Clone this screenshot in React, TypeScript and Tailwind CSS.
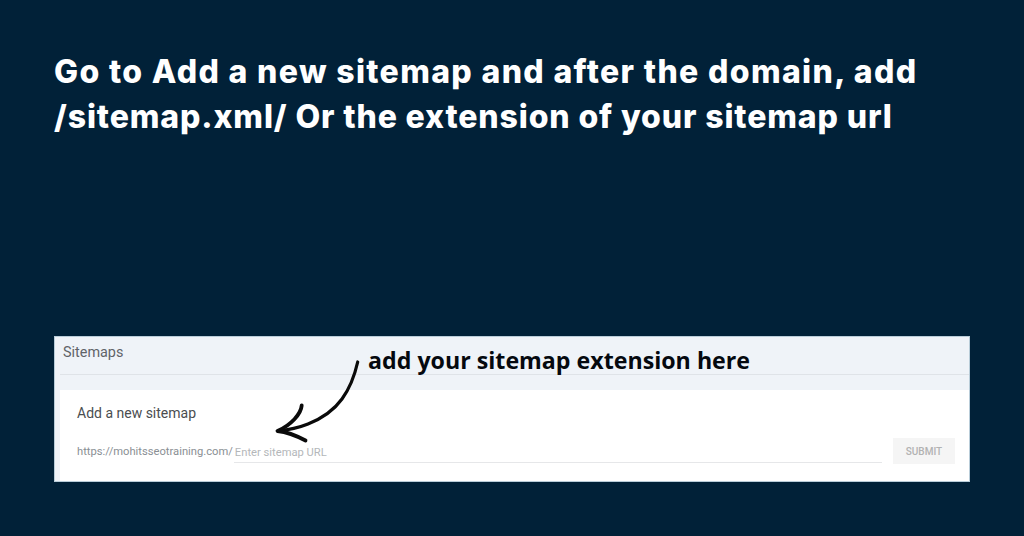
import React from 'react';

const App = () => {
  return (
    <div className="w-[1024px] h-[536px] overflow-hidden bg-[#012138] flex flex-col pl-[54px] pr-[54px] pt-[49px]">
      <h1 className="text-white font-extrabold text-[32px] leading-[45px] whitespace-nowrap font-['Inter',sans-serif]">
        <span className="block tracking-[1.35px]">Go to Add a new sitemap and after the domain, add</span>
        <span className="block tracking-[0.88px]">/sitemap.xml/ Or the extension of your sitemap url</span>
      </h1>

      <div className="relative mt-[197px] h-[146px] bg-[#eff3f8] flex flex-col font-['Roboto',sans-serif] border border-[#b9cdd9]">
        <div className="h-[38px] ml-[5px] border-b border-[#dfe3e8] flex items-center pl-[3px] pb-[6px] text-[14.4px] text-[#5f6368]">
          Sitemaps
        </div>
        <div className="flex-1 mt-[15px] ml-[5px] bg-white pl-[17px] pr-[14px] flex flex-col">
          <div className="mt-[14px] text-[14px] leading-[18px] text-[#4a4d50]">Add a new sitemap</div>
          <div className="mt-[14px] flex items-end">
            <span className="text-[11.2px] leading-[16px] text-[#8a8f94] pb-[3px] whitespace-nowrap">https://mohitsseotraining.com/</span>
            <div className="ml-[1px] flex-1 h-[27px] border-b border-[#e6e7e9] flex items-end pl-[1px] pb-[1px] text-[11.2px] leading-[16px] text-[#b4b7ba]">
              Enter sitemap URL
            </div>
            <button className="ml-[11px] w-[62px] h-[26px] mb-[-1px] bg-[#f5f5f5] text-[10px] font-medium text-[#b2b2b2] flex items-center justify-center">
              SUBMIT
            </button>
          </div>
        </div>

        <div className="absolute left-[313px] top-[7px] text-[#05090f] font-bold text-[23.2px] leading-[32px] whitespace-nowrap font-['Open_Sans',sans-serif]">
          add your sitemap extension here
        </div>

        <svg className="absolute left-[-1px] top-[-1px]" width="916" height="146" viewBox="54 336 916 146" fill="none">
          <path
            d="M357.7 362 C355 374 350 388 342 399 C334 410 323 418 308 424 C298 428 288 430 278 431"
            stroke="#0a0a0a"
            strokeWidth="3.2"
            strokeLinecap="round"
          />
          <path
            d="M301.7 405.5 C301 414 291 425 277.5 431 C287 432 297 436 305.5 440.5"
            stroke="#0a0a0a"
            strokeWidth="3.8"
            strokeLinecap="round"
            strokeLinejoin="round"
          />
        </svg>
      </div>
    </div>
  );
};

export default App;
